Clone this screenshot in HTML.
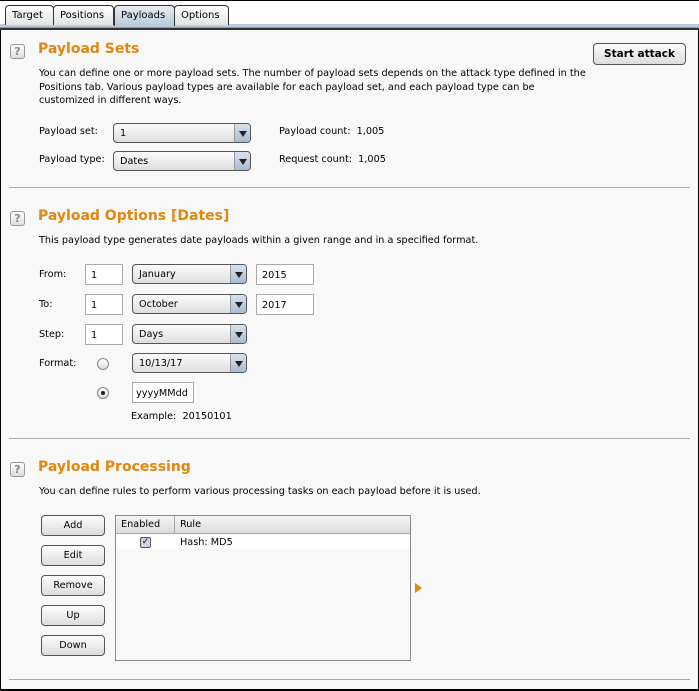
<!DOCTYPE html>
<html><head><style>
*{box-sizing:border-box}
body{margin:0;width:699px;height:691px;overflow:hidden;font-family:"DejaVu Sans",sans-serif;font-size:9.7px;color:#000;background:#fff}
#frame{position:absolute;left:0;top:0;width:699px;height:691px;border:1px solid #000;border-bottom:2px solid #000;background:#f8f8f8}
#in{position:absolute;left:-1px;top:-1px;width:699px;height:691px}
.abs{position:absolute;white-space:nowrap}
.tabbar{position:absolute;left:0;top:0;width:699px;height:29px;background:#fff;border-top:1px solid #000}
.strip{position:absolute;left:0;top:24px;width:699px;height:4px;background:#b9c9da;border-bottom:1px solid #8aa0b8}
.line{position:absolute;left:0;top:28px;width:699px;height:2px;background:#333}
.tab{position:absolute;top:5px;height:20px;border:1px solid #333;border-bottom:none;border-radius:4px 4px 0 0;background:linear-gradient(#fff,#e4e4e4);padding:4px 6px 0;font-size:10px}
.tab.sel{background:linear-gradient(#e6edf5,#b9c9da);height:21px}
.help{position:absolute;width:15px;height:15px;border:1px solid #999;border-radius:3px;background:linear-gradient(#fff,#ddd);color:#888;font-size:11px;font-weight:bold;text-align:center;line-height:13px}
h2{position:absolute;margin:0;font-size:14px;font-weight:bold;color:#e0870f;white-space:nowrap}
.hr{position:absolute;left:9px;width:681px;height:1px;background:#aaa}
.combo{position:absolute;height:20px;border:1px solid #555;border-radius:4px;background:linear-gradient(#fbfbfb,#dedede);padding:4px 6px;font-size:9.7px}
.combo .ar{position:absolute;right:0;top:0;width:16px;height:18px;border-left:1px solid #999;background:linear-gradient(#d9e2ec,#a9bbcf);border-radius:0 3px 3px 0}
.combo .ar:after{content:"";position:absolute;left:4px;top:7px;border-left:4px solid transparent;border-right:4px solid transparent;border-top:6px solid #222}
.tf{position:absolute;height:21px;border:1px solid #aaa;background:#fff;padding:5px 5px;font-size:9.7px}
.btn{position:absolute;left:41px;width:64px;height:21px;border:1px solid #555;border-radius:4px;background:linear-gradient(#fdfdfd,#dcdcdc);text-align:center;font-size:9.7px;padding-top:4px}
.radio{position:absolute;width:12px;height:12px;border:1px solid #888;border-radius:50%;background:linear-gradient(#fff,#ddd)}
</style></head><body>
<div id="frame"><div id="in">
<div class="tabbar"></div>
<div class="strip"></div><div class="line"></div>
<div class="tab" style="left:5px;width:49px">Target</div>
<div class="tab" style="left:53px;width:61px">Positions</div>
<div class="tab sel" style="left:114px;width:61px">Payloads</div>
<div class="tab" style="left:174px;width:55px">Options</div>

<div class="help" style="left:10px;top:44px">?</div>
<h2 style="left:38px;top:41px">Payload Sets</h2>
<div class="abs" style="left:593px;top:43px;width:93px;height:22px;border:1px solid #555;border-radius:4px;background:linear-gradient(#fdfdfd,#dcdcdc);font-weight:bold;font-size:10.5px;text-align:center;padding-top:4px">Start attack</div>
<div class="abs" style="left:39px;top:67px;line-height:13.5px">You can define one or more payload sets. The number of payload sets depends on the attack type defined in the<br>Positions tab. Various payload types are available for each payload set, and each payload type can be<br>customized in different ways.</div>
<div class="abs" style="left:39px;top:126px">Payload set:</div>
<div class="combo" style="left:113px;top:123px;width:138px">1<div class="ar"></div></div>
<div class="abs" style="left:279px;top:126px">Payload count:&nbsp; 1,005</div>
<div class="abs" style="left:39px;top:154px">Payload type:</div>
<div class="combo" style="left:113px;top:151px;width:138px">Dates<div class="ar"></div></div>
<div class="abs" style="left:279px;top:154px">Request count:&nbsp; 1,005</div>
<div class="hr" style="top:187px"></div>

<div class="help" style="left:10px;top:211px">?</div>
<h2 style="left:38px;top:208px">Payload Options [Dates]</h2>
<div class="abs" style="left:39px;top:235px">This payload type generates date payloads within a given range and in a specified format.</div>
<div class="abs" style="left:39px;top:269px">From:</div>
<div class="tf" style="left:85px;top:264px;width:38px">1</div>
<div class="combo" style="left:132px;top:264px;width:115px">January<div class="ar"></div></div>
<div class="tf" style="left:256px;top:264px;width:58px">2015</div>
<div class="abs" style="left:39px;top:299px">To:</div>
<div class="tf" style="left:85px;top:294px;width:38px">1</div>
<div class="combo" style="left:132px;top:294px;width:115px">October<div class="ar"></div></div>
<div class="tf" style="left:256px;top:294px;width:58px">2017</div>
<div class="abs" style="left:39px;top:329px">Step:</div>
<div class="tf" style="left:85px;top:324px;width:38px">1</div>
<div class="combo" style="left:132px;top:324px;width:115px">Days<div class="ar"></div></div>
<div class="abs" style="left:39px;top:358px">Format:</div>
<div class="radio" style="left:97px;top:358px"></div>
<div class="combo" style="left:132px;top:353px;width:115px">10/13/17<div class="ar"></div></div>
<div class="radio" style="left:97px;top:387px"><div style="position:absolute;left:3px;top:3px;width:4px;height:4px;border-radius:50%;background:#222"></div></div>
<div class="tf" style="left:132px;top:382px;width:62px;padding-left:3px">yyyyMMdd</div>
<div class="abs" style="left:131px;top:411px">Example:&nbsp; 20150101</div>
<div class="hr" style="top:438px"></div>

<div class="help" style="left:10px;top:462px">?</div>
<h2 style="left:38px;top:459px">Payload Processing</h2>
<div class="abs" style="left:39px;top:486px">You can define rules to perform various processing tasks on each payload before it is used.</div>
<div class="btn" style="top:515px">Add</div>
<div class="btn" style="top:545px">Edit</div>
<div class="btn" style="top:575px">Remove</div>
<div class="btn" style="top:605px">Up</div>
<div class="btn" style="top:635px">Down</div>
<div class="abs" style="left:115px;top:515px;width:296px;height:146px;border:1px solid #888;background:#f8f8f8">
 <div style="position:absolute;left:0;top:0;width:294px;height:18px;background:linear-gradient(#f4f4f4,#dcdcdc);border-bottom:1px solid #aaa"></div>
 <div style="position:absolute;left:58px;top:0;width:1px;height:18px;background:#aaa"></div>
 <div class="abs" style="left:5px;top:3px">Enabled</div>
 <div class="abs" style="left:64px;top:3px">Rule</div>
 <div style="position:absolute;left:0;top:19px;width:294px;height:14px;background:#fff"></div>
 <div style="position:absolute;left:24px;top:21px;width:11px;height:11px;border:1px solid #555;border-radius:2px;background:#c9d5e2;font-size:9px;line-height:9px;text-align:center">✓</div>
 <div class="abs" style="left:64px;top:21px">Hash: MD5</div>
</div>
<div style="position:absolute;left:415px;top:583px;border-top:5px solid transparent;border-bottom:5px solid transparent;border-left:7px solid #e0870f"></div>
<div class="hr" style="top:679px"></div>
</div></div>
</body></html>
